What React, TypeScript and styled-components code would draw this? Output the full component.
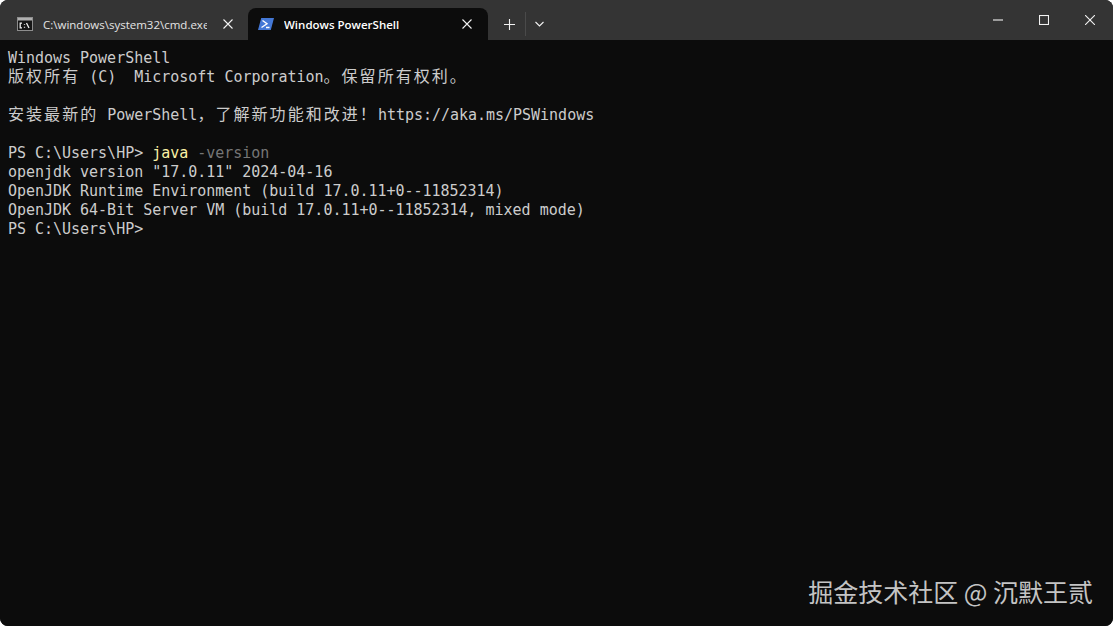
import React from 'react';
import styled, { createGlobalStyle } from 'styled-components';

const GlobalStyle = createGlobalStyle`
  html, body {
    margin: 0;
    padding: 0;
    background: #ffffff;
  }
`;

const Window = styled.div`
  position: relative;
  width: 1113px;
  height: 626px;
  display: flex;
  flex-direction: column;
  overflow: hidden;
  background: #0c0c0c;
  border-radius: 8px;
`;

const TitleBar = styled.div`
  height: 40px;
  flex: none;
  display: flex;
  align-items: flex-end;
  padding-left: 7px;
  background: #343434;
  font-family: 'Open Sans', 'Liberation Sans', sans-serif;
  color: #fff;
`;

const Tab = styled.div<{ $active?: boolean }>`
  box-sizing: border-box;
  width: ${(p) => (p.$active ? '240px' : '241px')};
  height: 32px;
  display: flex;
  align-items: center;
  padding: 0 10px;
  border-radius: 8px 8px 0 0;
  background: ${(p) => (p.$active ? '#0c0c0c' : 'transparent')};
`;

const TabIcon = styled.svg`
  flex: none;
  width: 16px;
  height: 16px;
  margin-right: 10px;
`;

const TabTitle = styled.span<{ $active?: boolean }>`
  flex: 1;
  min-width: 0;
  overflow: hidden;
  white-space: nowrap;
  font-size: 11.5px;
  font-weight: ${(p) => (p.$active ? 600 : 400)};
  color: ${(p) => (p.$active ? '#ffffff' : '#e4e4e4')};
`;

const IconSvg = styled.svg`
  flex: none;
  display: block;
  fill: none;
  stroke: #f2f2f2;
  stroke-width: 1.1;
`;

const TabClose = styled.div<{ $active?: boolean }>`
  flex: none;
  width: 20px;
  display: flex;
  justify-content: center;
  margin-left: ${(p) => (p.$active ? '7px' : '11px')};
  margin-right: ${(p) => (p.$active ? '1px' : '0')};
`;

const TabActions = styled.div`
  display: flex;
  align-items: center;
  height: 32px;
  margin-left: 5px;
`;

const ActionButton = styled.div<{ $w: number }>`
  width: ${(p) => p.$w}px;
  height: 28px;
  display: flex;
  align-items: center;
  justify-content: center;
`;

const ActionDivider = styled.div`
  width: 1px;
  height: 24px;
  background: #4a4a4a;
`;

const WindowControls = styled.div`
  margin-left: auto;
  align-self: flex-start;
  display: flex;
  height: 40px;
`;

const ControlButton = styled.div`
  width: 46px;
  height: 40px;
  display: flex;
  align-items: center;
  justify-content: center;
`;

const Terminal = styled.pre`
  flex: 1;
  margin: 0;
  padding: 9px 8px 0;
  background: #0c0c0c;
  color: #cccccc;
  font-family: 'DejaVu Sans Mono', 'Noto Sans CJK SC', monospace;
  font-size: 15px;
  letter-spacing: -0.02px;
  line-height: 19px;
  white-space: pre;
`;

const Line = styled.div`
  height: 19px;
`;

const Cjk = styled.span`
  font-family: 'Noto Sans CJK SC', sans-serif;
  font-size: 16px;
  line-height: 0;
  letter-spacing: 2.05px;
`;

const Command = styled.span`
  color: #f9f1a5;
`;

const Param = styled.span`
  color: #767676;
`;

const Watermark = styled.div`
  position: absolute;
  right: 20px;
  top: 574px;
  color: #c4c4c4;
  font-family: 'Noto Sans CJK SC', sans-serif;
  font-size: 25px;
  line-height: 34px;
  white-space: nowrap;
`;

const App = () => {
  return (
    <>
      <GlobalStyle />
      <Window>
        <TitleBar>
          <Tab>
            <TabIcon viewBox="0 0 16 16">
              <rect x="0.5" y="1.5" width="15" height="13" fill="#161616" stroke="#8e8e8e" />
              <rect x="1" y="2" width="14" height="2.5" fill="#b0b0b0" />
              <path d="M5 7.2H3.2v4.6H5M7.5 8v.8M7.5 10.8v1M9.5 7l2.5 5" fill="none" stroke="#f0f0f0" strokeWidth="1.3" />
            </TabIcon>
            <TabTitle>C:\windows\system32\cmd.exe</TabTitle>
            <TabClose>
              <IconSvg width="10" height="10" viewBox="0 0 10 10">
                <path d="M0.5 0.5l9 9M9.5 0.5l-9 9" />
              </IconSvg>
            </TabClose>
          </Tab>
          <Tab $active>
            <TabIcon viewBox="0 0 16 16">
              <path d="M3.2 2H16l-3.2 12H0z" fill="#4478d6" />
              <path d="M4.5 4.5l4.5 3.3-5.5 3.7M8 11.5h3.5" fill="none" stroke="#ffffff" strokeWidth="1.4" />
            </TabIcon>
            <TabTitle $active>Windows PowerShell</TabTitle>
            <TabClose $active>
              <IconSvg width="10" height="10" viewBox="0 0 10 10">
                <path d="M0.5 0.5l9 9M9.5 0.5l-9 9" />
              </IconSvg>
            </TabClose>
          </Tab>
          <TabActions>
            <ActionButton $w={32}>
              <IconSvg width="11" height="11" viewBox="0 0 11 11">
                <path d="M5.5 0v11M0 5.5h11" />
              </IconSvg>
            </ActionButton>
            <ActionDivider />
            <ActionButton $w={26}>
              <IconSvg width="9" height="6" viewBox="0 0 9 6">
                <path d="M0.5 1l4 4 4-4" />
              </IconSvg>
            </ActionButton>
          </TabActions>
          <WindowControls>
            <ControlButton>
              <IconSvg width="10" height="2" viewBox="0 0 10 2">
                <path d="M0 1h10" />
              </IconSvg>
            </ControlButton>
            <ControlButton>
              <IconSvg width="10" height="10" viewBox="0 0 10 10">
                <rect x="0.5" y="0.5" width="9" height="9" />
              </IconSvg>
            </ControlButton>
            <ControlButton>
              <IconSvg width="10" height="10" viewBox="0 0 10 10">
                <path d="M0 0l10 10M10 0L0 10" />
              </IconSvg>
            </ControlButton>
          </WindowControls>
        </TitleBar>
        <Terminal>
          <Line>Windows PowerShell</Line>
          <Line><Cjk>版权所有</Cjk> (C)  Microsoft Corporation<Cjk>。保留所有权利。</Cjk></Line>
          <Line />
          <Line><Cjk>安装最新的</Cjk> PowerShell<Cjk>，了解新功能和改进！</Cjk>https://aka.ms/PSWindows</Line>
          <Line />
          <Line>PS C:\Users\HP&gt; <Command>java</Command> <Param>-version</Param></Line>
          <Line>openjdk version "17.0.11" 2024-04-16</Line>
          <Line>OpenJDK Runtime Environment (build 17.0.11+0--11852314)</Line>
          <Line>OpenJDK 64-Bit Server VM (build 17.0.11+0--11852314, mixed mode)</Line>
          <Line>PS C:\Users\HP&gt;</Line>
        </Terminal>
        <Watermark>掘金技术社区 @ 沉默王贰</Watermark>
      </Window>
    </>
  );
};

export default App;
